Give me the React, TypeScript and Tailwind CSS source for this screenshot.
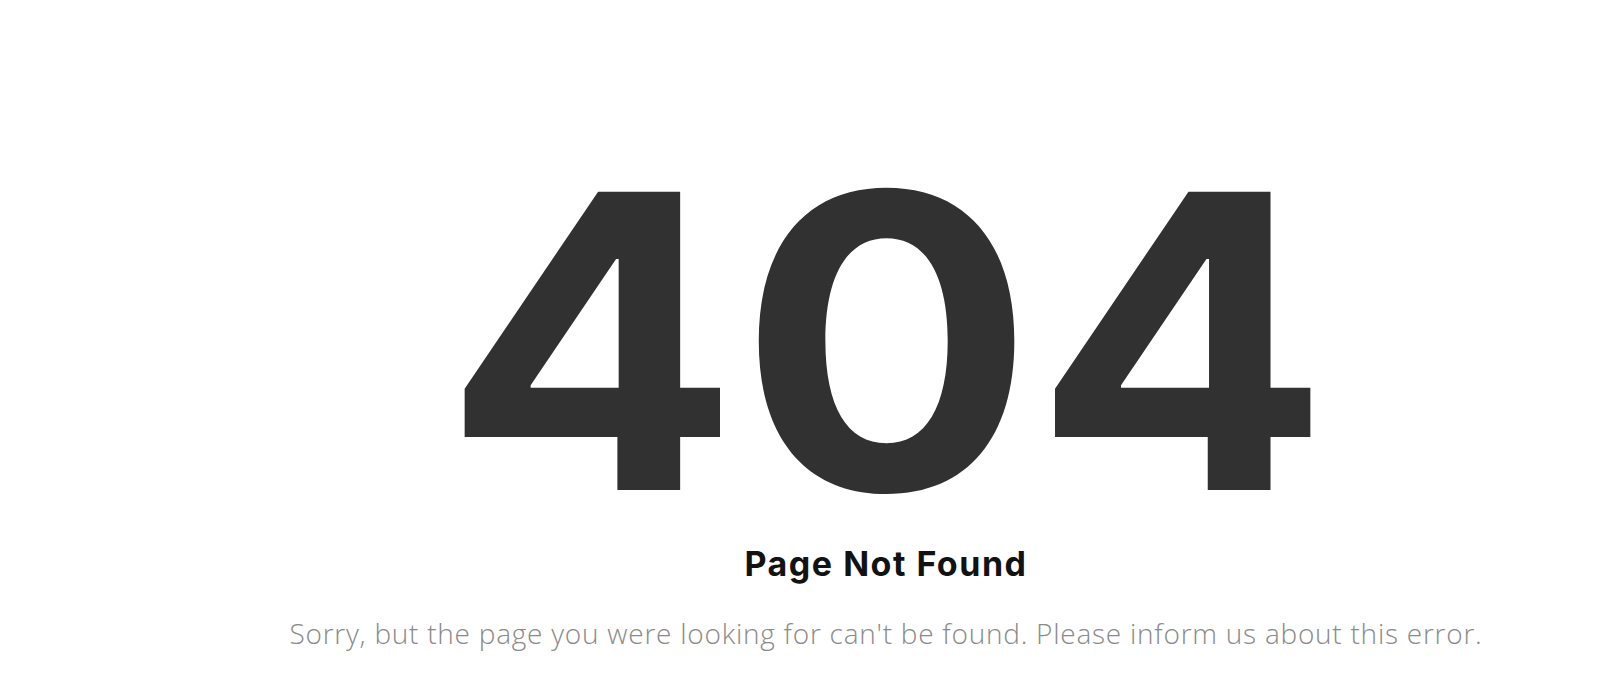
export default function App() {
  return (
    <div className="w-[1600px] h-[698px] bg-white flex overflow-hidden">
      <div className="w-[172px] shrink-0" />
      <main className="flex-1 flex flex-col items-center pt-[136px]">
        <h1
          className="text-[#313131] font-[650] leading-none tracking-[-1px] text-[410px] scale-x-[1.07]"
          style={{ fontFamily: "Inter, 'Noto Sans', sans-serif" }}
        >
          404
        </h1>
        <h2
          className="mt-[1px] text-[#121212] font-bold text-[34px] tracking-[1.5px] leading-none"
          style={{ fontFamily: "Inter, 'Noto Sans', sans-serif" }}
        >
          Page Not Found
        </h2>
        <p
          className="mt-[38px] text-[#8a8a8a] font-light text-[28px] tracking-[0.75px] leading-none"
          style={{ fontFamily: "'Open Sans', Lato, sans-serif" }}
        >
          Sorry, but the page you were looking for can't be found. Please inform us about this error.
        </p>
      </main>
    </div>
  );
}
